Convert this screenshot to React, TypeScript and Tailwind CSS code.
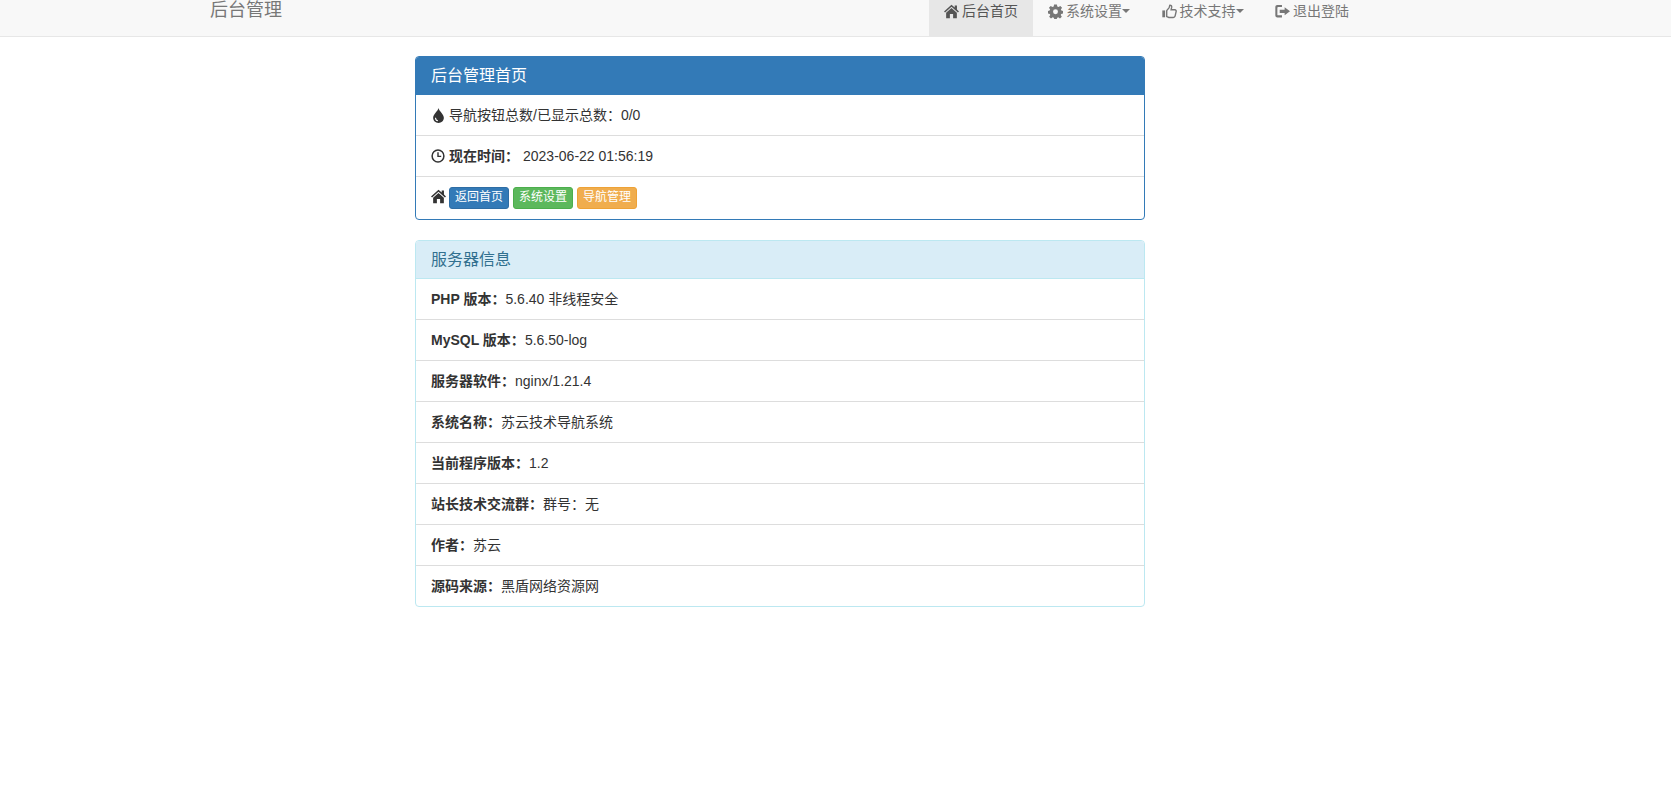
import React from "react";

const font = "font-['Liberation_Sans','Noto_Sans_CJK_SC',sans-serif]";

function HomeIcon({ size = 15 }: { size?: number }) {
  return (
    <svg width={size} height={size} viewBox="0 0 14 14" fill="currentColor" className="shrink-0">
      <path d="M7 .6 L10 3.3 V1.4 H12.1 V5.2 L14 6.9 L13 8 L7 2.6 L1 8 L0 6.9 Z" />
      <path d="M7 3.8 L12 8.2 V13.4 H8.5 V9.4 H5.5 V13.4 H2 V8.2 Z" />
    </svg>
  );
}

function CogIcon({ size = 15 }: { size?: number }) {
  return (
    <svg width={size} height={size} viewBox="0 0 14 14" fill="currentColor" className="shrink-0">
      <path fillRule="evenodd" d="M5.7 0.5 H8.3 L8.7 2.4 L9.8 2.9 L11.5 1.9 L13.1 3.6 L12 5.2 L12.5 6.1 L14 6.6 V8.9 L12.3 9.3 L11.9 10.3 L12.9 12 L11.2 13.5 L9.6 12.4 L8.6 12.9 L8.2 14 H5.8 L5.4 12.9 L4.4 12.4 L2.8 13.5 L1.1 12 L2.1 10.3 L1.7 9.3 L0 8.9 V6.6 L1.5 6.1 L2 5.2 L0.9 3.6 L2.5 1.9 L4.2 2.9 L5.3 2.4 Z M7 5 A2.3 2.3 0 1 0 7 9.6 A2.3 2.3 0 1 0 7 5 Z" />
    </svg>
  );
}

function ThumbIcon({ size = 15 }: { size?: number }) {
  return (
    <svg width={size} height={size} viewBox="0 0 14 14" fill="none" stroke="currentColor" className="shrink-0">
      <rect x="0.3" y="6" width="2.6" height="6.4" fill="currentColor" stroke="none" />
      <path strokeWidth="1.3" d="M4.4 6.2 L6.5 3.6 C7 2.8 7 1.6 7.4 1 C8.6 1 9.2 2 9 3.2 L8.5 5.4 H12 C13 5.4 13.4 6.2 13.2 7 L12.2 11.4 C12 12.2 11.4 12.6 10.6 12.6 H6.4 L4.4 11.8 Z" />
    </svg>
  );
}

function LogoutIcon({ size = 15 }: { size?: number }) {
  return (
    <svg width={size} height={size} viewBox="0 0 14 14" fill="currentColor" className="shrink-0">
      <path d="M6.5 1 H2.2 C1 1 0.3 1.8 0.3 3 V10.5 C0.3 11.7 1 12.5 2.2 12.5 H6.5 V10.6 H3 C2.4 10.6 2.2 10.3 2.2 9.8 V3.7 C2.2 3.2 2.4 2.9 3 2.9 H6.5 Z" />
      <path d="M9 3 L14 6.8 L9 10.6 V8.3 H4.4 V5.3 H9 Z" />
    </svg>
  );
}

function TintIcon({ size = 15 }: { size?: number }) {
  return (
    <svg width={size} height={size} viewBox="0 0 14 14" className="shrink-0">
      <path fill="currentColor" d="M7 0 C7.6 3 12 5.8 12 9.2 C12 12 9.8 14 7 14 C4.2 14 2 12 2 9.2 C2 5.8 6.4 3 7 0 Z" />
      <path fill="none" stroke="#fff" strokeWidth="1" d="M4.2 9 C4.2 10.6 5 11.6 6.4 12" />
    </svg>
  );
}

function ClockIcon({ size = 14 }: { size?: number }) {
  return (
    <svg width={size} height={size} viewBox="0 0 14 14" fill="none" stroke="currentColor" className="shrink-0">
      <circle cx="7" cy="7" r="5.9" strokeWidth="1.5" />
      <path d="M7 3.2 V7.4 H10.2" strokeWidth="1.4" />
    </svg>
  );
}

function Caret() {
  return <span className="mr-[1.5px] inline-block border-x-4 border-t-4 border-x-transparent border-t-current align-middle" />;
}

function NavItem({ icon, label, caret, active }: { icon: React.ReactNode; label: string; caret?: boolean; active?: boolean }) {
  return (
    <div className={`flex h-full items-start gap-[3px] px-[15px] pt-[1px] ${active ? "bg-[#e7e7e7] text-[#555]" : "text-[#777]"}`}>
      <span className="flex h-5 items-center">{icon}</span>
      <span className="leading-5">{label}</span>
      {caret && <span className="-ml-[3px] flex h-5 items-center"><Caret /></span>}
    </div>
  );
}

function Row({ children }: { children: React.ReactNode }) {
  return <div className="border-b border-[#ddd] px-[15px] py-[10px] leading-5 last:border-b-0">{children}</div>;
}

function Btn({ color, children }: { color: string; children: React.ReactNode }) {
  return <span className={`h-[22px] rounded-[3px] border px-[5px] text-xs leading-[18px] text-white ${color}`}>{children}</span>;
}

const info: [string, string][] = [
  ["PHP 版本：", "5.6.40 非线程安全"],
  ["MySQL 版本：", "5.6.50-log"],
  ["服务器软件：", "nginx/1.21.4"],
  ["系统名称：", "苏云技术导航系统"],
  ["当前程序版本：", "1.2"],
  ["站长技术交流群：", "群号：无"],
  ["作者：", "苏云"],
  ["源码来源：", "黑盾网络资源网"],
];

export default function App() {
  return (
    <div className={`min-h-[804px] bg-white text-sm text-[#333] ${font}`}>
      <nav className="flex h-[37px] justify-between border-b border-[#e7e7e7] bg-[#f8f8f8] pl-[210px] pr-[307px]">
        <div className="text-lg leading-[20px] text-[#777]">后台管理</div>
        <div className="flex h-full">
          <NavItem active icon={<HomeIcon />} label="后台首页" />
          <NavItem icon={<CogIcon />} label="系统设置" caret />
          <NavItem icon={<ThumbIcon />} label="技术支持" caret />
          <NavItem icon={<LogoutIcon />} label="退出登陆" />
        </div>
      </nav>
      <main className="ml-[415px] w-[730px] pt-[19px]">
        <section className="mb-5 overflow-hidden rounded border border-[#337ab7]">
          <h3 className="flex h-[38px] items-center bg-[#337ab7] px-[15px] text-base text-white">后台管理首页</h3>
          <Row><span className="flex items-center gap-[3px]"><TintIcon />导航按钮总数/已显示总数：0/0</span></Row>
          <Row><span className="flex items-center gap-1"><ClockIcon /><b>现在时间：</b>2023-06-22 01:56:19</span></Row>
          <Row>
            <span className="flex items-center gap-[3px]">
              <span className="-mt-1"><HomeIcon /></span>
              <span className="flex gap-1">
                <Btn color="border-[#2e6da4] bg-[#337ab7]">返回首页</Btn>
                <Btn color="border-[#4cae4c] bg-[#5cb85c]">系统设置</Btn>
                <Btn color="border-[#eea236] bg-[#f0ad4e]">导航管理</Btn>
              </span>
            </span>
          </Row>
        </section>
        <section className="overflow-hidden rounded border border-[#bce8f1]">
          <h3 className="flex h-[38px] items-center border-b border-[#bce8f1] bg-[#d9edf7] px-[15px] text-base text-[#31708f]">服务器信息</h3>
          {info.map(([k, v]) => (
            <Row key={k}><b>{k}</b>{v}</Row>
          ))}
        </section>
      </main>
    </div>
  );
}
